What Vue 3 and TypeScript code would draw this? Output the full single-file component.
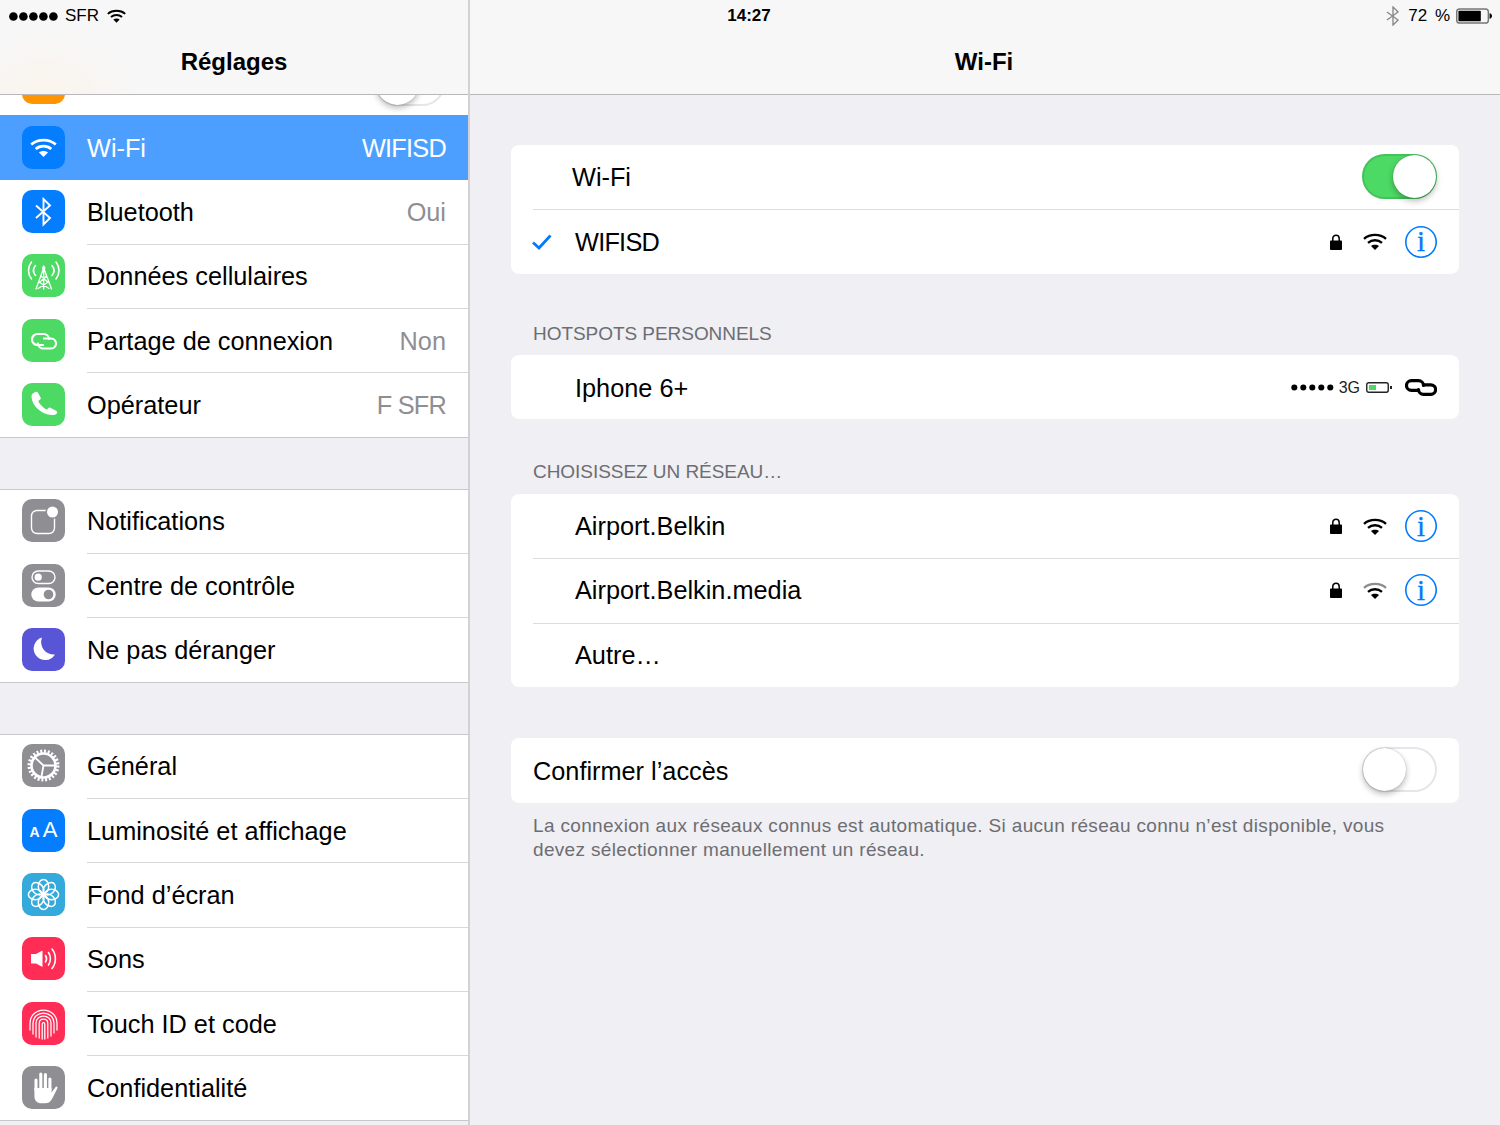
<script setup lang="ts">
interface SideRow { label: string; icon: string; color: string; value?: string; active?: boolean; caps?: boolean }

const groups: SideRow[][] = [
  [
    { label: 'Wi-Fi', icon: 'wifi', color: 'blue', value: 'WIFISD', active: true, caps: true },
    { label: 'Bluetooth', icon: 'bt', color: 'blue', value: 'Oui' },
    { label: 'Données cellulaires', icon: 'cell', color: 'green' },
    { label: 'Partage de connexion', icon: 'chain-app', color: 'green', value: 'Non' },
    { label: 'Opérateur', icon: 'phone', color: 'green', value: 'F SFR', caps: true },
  ],
  [
    { label: 'Notifications', icon: 'notif', color: 'gray' },
    { label: 'Centre de contrôle', icon: 'control', color: 'gray' },
    { label: 'Ne pas déranger', icon: 'moon', color: 'purple' },
  ],
  [
    { label: 'Général', icon: 'gear', color: 'gray' },
    { label: 'Luminosité et affichage', icon: 'aa', color: 'blue' },
    { label: 'Fond d’écran', icon: 'flower', color: 'teal' },
    { label: 'Sons', icon: 'sound', color: 'red' },
    { label: 'Touch ID et code', icon: 'finger', color: 'red' },
    { label: 'Confidentialité', icon: 'hand', color: 'gray' },
  ],
]

const networks = [
  { name: 'Airport.Belkin', icon: '#wifi' },
  { name: 'Airport.Belkin.media', icon: '#wifi-weak' },
]
</script>

<template>
  <div class="screen">
    <svg class="defs" aria-hidden="true">
      <symbol id="wifi" viewBox="0 0 24 17">
        <g fill="none" stroke="currentColor" stroke-width="2.4">
          <path d="M1 5.8C7 .6 17 .6 23 5.8" />
          <path d="M5 9.8C9 6.4 15 6.4 19 9.8" />
        </g>
        <path fill="currentColor" d="M8 13C10 11.2 14 11.2 16 13L12 17Z" />
      </symbol>
      <symbol id="wifi-weak" viewBox="0 0 24 17">
        <g fill="none" stroke="currentColor" stroke-width="2.4">
          <path opacity=".45" d="M1 5.8C7 .6 17 .6 23 5.8" />
          <path d="M5 9.8C9 6.4 15 6.4 19 9.8" />
        </g>
        <path fill="currentColor" d="M8 13C10 11.2 14 11.2 16 13L12 17Z" />
      </symbol>
      <symbol id="lock" viewBox="0 0 12 16">
        <path fill="none" stroke="currentColor" stroke-width="1.5" d="M2.8 7V4.4a3.2 3.2 0 0 1 6.4 0V7" />
        <rect x="0" y="6.5" width="12" height="9.5" rx=".8" fill="currentColor" />
      </symbol>
      <symbol id="chain" viewBox="0 0 32 17">
        <g fill="none" stroke="currentColor" stroke-width="3.2" stroke-linecap="round">
          <path d="M13 11.4H6.4A4.9 4.9 0 0 1 6.4 1.6H13.5A5 5 0 0 1 18.5 6.5" />
          <path d="M19 5.8H25.8A4.8 4.8 0 0 1 25.8 15.4H18.5A5 5 0 0 1 13.5 10.5" />
        </g>
      </symbol>

      <symbol id="i-wifi" viewBox="0 0 43 43">
        <use href="#wifi" x="8" y="12" width="27" height="19" />
      </symbol>
      <symbol id="i-bt" viewBox="0 0 43 43">
        <path fill="none" stroke="currentColor" stroke-width="1.9" d="M14 15.5 28 28 21.5 34.5V9L28 15.5 14 28" />
      </symbol>
      <symbol id="i-cell" viewBox="0 0 43 43">
        <g fill="none" stroke="currentColor" stroke-width="1.6" stroke-linecap="round">
          <path d="M9.5 8C5.5 13 5.5 20 9.5 25M34 8C38 13 38 20 34 25" />
          <path d="M13.5 11.5C11 14.5 11 18.5 13.5 21.5M30 11.5C32.5 14.5 32.5 18.5 30 21.5" />
          <path stroke-width="1.3" d="M21.7 14 14 35M21.7 14 29.5 35M17 28 27 34.5M26.5 28 16 34.5M19 22 25.5 28M24.5 22 18 28M21.7 12V35" />
        </g>
        <circle cx="21.7" cy="14" r="1.8" fill="currentColor" />
      </symbol>
      <symbol id="i-chain-app" viewBox="0 0 43 43">
        <g fill="none" stroke="currentColor" stroke-width="2.2" stroke-linecap="round">
          <path d="M21 26H15.5A5.5 5.5 0 0 1 15.5 15H21.5A5.5 5.5 0 0 1 27 20" />
          <path d="M22 19.5H29A5 5 0 0 1 29 29.5H21.5A5.5 5.5 0 0 1 16 24.5" />
        </g>
      </symbol>
      <symbol id="i-phone" viewBox="0 0 43 43">
        <path fill="currentColor" d="M9.5 13C9.6 11 12 9.4 14 8.8 15 8.6 15.6 9 16 9.8L18.6 14.6C19 15.3 18.8 16 18.2 16.5L16.2 18C17.6 21 21 25 24.8 26.8L26.4 25C27 24.4 27.7 24.3 28.4 24.7L34.4 28C35.2 28.5 35.3 29.2 35 30 34.2 31.6 32.2 32.2 30 32 19 31.4 9.6 22.6 9.5 13Z" />
      </symbol>
      <symbol id="i-notif" viewBox="0 0 43 43">
        <rect x="9.5" y="11.5" width="23" height="23" rx="5.5" fill="none" stroke="currentColor" stroke-width="1.4" />
        <circle cx="30.5" cy="13" r="7" class="cut-gray" />
        <circle cx="30.5" cy="13" r="5.5" fill="currentColor" />
      </symbol>
      <symbol id="i-control" viewBox="0 0 43 43">
        <rect x="10" y="7" width="23" height="12.5" rx="6.2" fill="none" stroke="currentColor" stroke-width="1.4" />
        <circle cx="16.2" cy="13.2" r="3.6" fill="currentColor" />
        <rect x="9.3" y="23.5" width="24.4" height="14" rx="7" fill="currentColor" />
        <circle cx="26.5" cy="30.5" r="4.8" class="cut-gray" />
      </symbol>
      <symbol id="i-moon" viewBox="0 0 43 43">
        <path fill="currentColor" d="M20 9.5A11.5 11.5 0 1 0 33 26.5 12.5 12.5 0 0 1 20 9.5Z" />
      </symbol>
      <symbol id="i-gear" viewBox="0 0 43 43">
        <circle cx="21.5" cy="21.5" r="14.2" fill="none" stroke="currentColor" stroke-width="3.6" stroke-dasharray="2 1.72" />
        <circle cx="21.5" cy="21.5" r="12" fill="none" stroke="currentColor" stroke-width="2.6" />
        <path fill="none" stroke="currentColor" stroke-width="1.8" d="M13.5 14 21.5 21.5H33M21.5 21.5 19.5 32.5" />
      </symbol>
      <symbol id="i-flower" viewBox="0 0 43 43">
        <g fill="none" stroke="currentColor" stroke-width="1.5">
          <ellipse v-for="a in 8" :key="a" cx="21.5" cy="13.4" rx="5.2" ry="7" :transform="`rotate(${a * 45} 21.5 21.5)`" />
        </g>
        <circle cx="21.5" cy="21.5" r="2.4" fill="currentColor" />
      </symbol>
      <symbol id="i-sound" viewBox="0 0 43 43">
        <path fill="currentColor" d="M9 17H14L20.5 13.5V30L14 26.5H9Z" />
        <g fill="none" stroke="currentColor" stroke-width="1.6" stroke-linecap="round">
          <path d="M23.5 18.5C24.8 20.5 24.8 23 23.5 25" />
          <path d="M26.5 15.5C29 19 29 24.5 26.5 28" />
          <path d="M30 12C34.5 17.5 34.5 26 30 31.5" />
        </g>
      </symbol>
      <symbol id="i-finger" viewBox="0 0 43 43">
        <g fill="none" stroke="currentColor" stroke-width="1.25" stroke-linecap="round">
          <path d="M8 28V21C8 13.5 14 8 21.5 8S35 13.5 35 21V28" />
          <path d="M11 32V21C11 15 16 11 21.5 11S32 15 32 21V31" />
          <path d="M14 35V21C14 17 17.5 14 21.5 14S29 17 29 21V34" />
          <path d="M17.2 36V21.5C17.2 19 19 17.2 21.5 17.2S25.8 19 25.8 21.5V36" />
          <path d="M20.2 37V22C20.2 20.2 22.8 20.2 22.8 22V37" />
        </g>
      </symbol>
      <symbol id="i-hand" viewBox="0 0 43 43">
        <g fill="none" stroke="currentColor" stroke-width="3.1" stroke-linecap="round">
          <path d="M14 24V14M18.8 22V8M23.4 22V8.5M27.9 24V13" />
        </g>
        <path fill="currentColor" d="M12.4 22H29.5V26.5L33.6 21C34.6 20 36 21 35.4 22.2L30 33C28.5 35.8 26.5 37.3 23 37.3H19.5C15 37.3 12.4 34.5 12.4 30Z" />
      </symbol>
    </svg>

    <div class="status">
      <div class="status-left">
        <svg class="signal" viewBox="0 0 50 9"><circle v-for="n in 5" :key="n" :cx="n * 10 - 5.6" cy="4.5" r="4.3" /></svg>
        <span>SFR</span>
        <svg class="status-wifi"><use href="#wifi" /></svg>
      </div>
      <div class="status-time">14:27</div>
      <div class="status-right">
        <svg class="status-bt" viewBox="0 0 14 20">
          <path fill="none" stroke="#8a8a8a" stroke-width="1.4" d="M1 6 12 14 7 19V1L12 6 1 14" />
        </svg>
        <span class="percent">72 %</span>
        <svg class="status-batt" viewBox="0 0 37 16">
          <rect x=".75" y=".75" width="32.5" height="14.5" rx="3" fill="none" stroke="#777" stroke-width="1.5" />
          <rect x="2.5" y="2.5" width="23" height="11" rx="1" />
          <path d="M34.5 5.2C36 5.5 37 6.5 37 8S36 10.5 34.5 10.8Z" />
        </svg>
      </div>
    </div>

    <aside class="side">
      <header class="nav side-nav">Réglages</header>
      <div class="peek">
        <span class="app orange peek-app"></span>
        <span class="switch peek-switch"><i class="knob"></i></span>
      </div>
      <section v-for="(group, g) in groups" :key="g" class="group">
        <div v-for="row in group" :key="row.label" class="side-row" :class="{ active: row.active }">
          <span class="app" :class="row.color">
            <span v-if="row.icon === 'aa'" class="aa"><small>A</small>A</span>
            <svg v-else class="app-svg"><use :href="`#i-${row.icon}`" /></svg>
          </span>
          <div class="side-body">
            <span>{{ row.label }}</span>
            <span v-if="row.value" class="value" :class="{ caps: row.caps }">{{ row.value }}</span>
          </div>
        </div>
      </section>
    </aside>

    <main class="main">
      <header class="nav main-nav">Wi-Fi</header>
      <div class="content">
        <section class="card">
          <div class="row">
            <span class="name toggle-name">Wi-Fi</span>
            <span class="switch on"><i class="knob"></i></span>
          </div>
          <div class="row low">
            <svg class="check" viewBox="0 0 20 16"><path fill="none" stroke="#007aff" stroke-width="2.8" d="M1 8.5 7 14 18.5 1.5" /></svg>
            <span class="name net-name caps">WIFISD</span>
            <svg class="lock"><use href="#lock" /></svg>
            <svg class="wifi"><use href="#wifi" /></svg>
            <span class="info">i</span>
          </div>
        </section>

        <h2 class="caption cap-hotspot">Hotspots personnels</h2>
        <section class="card">
          <div class="row low">
            <span class="name indent">Iphone 6+</span>
            <svg class="small-signal" viewBox="0 0 44 7"><circle v-for="n in 5" :key="n" :cx="n * 9.2 - 5.8" cy="3.5" r="3.1" /></svg>
            <span class="three-g">3G</span>
            <svg class="hot-batt" viewBox="0 0 26 11">
              <rect x=".75" y=".75" width="21.5" height="9.5" rx="2" fill="none" stroke="#222" stroke-width="1.4" />
              <rect x="3" y="3" width="7" height="5" fill="#4cd964" />
              <rect x="24" y="4" width="2" height="3" fill="#222" />
            </svg>
            <svg class="chain"><use href="#chain" /></svg>
          </div>
        </section>

        <h2 class="caption cap-network">Choisissez un réseau…</h2>
        <section class="card">
          <div v-for="net in networks" :key="net.name" class="row">
            <span class="name indent">{{ net.name }}</span>
            <svg class="lock"><use href="#lock" /></svg>
            <svg class="wifi"><use :href="net.icon" /></svg>
            <span class="info">i</span>
          </div>
          <div class="row">
            <span class="name indent">Autre…</span>
          </div>
        </section>

        <section class="card confirm">
          <div class="row confirm-row">
            <span class="name">Confirmer l’accès</span>
            <span class="switch"><i class="knob"></i></span>
          </div>
        </section>
        <p class="note">La connexion aux réseaux connus est automatique. Si aucun réseau connu n’est disponible, vous devez sélectionner manuellement un réseau.</p>
      </div>
    </main>
  </div>
</template>

<style scoped>
.screen {
  position: relative;
  display: flex;
  width: 1500px;
  height: 1125px;
  overflow: hidden;
  background: #efeff4;
  color: #000;
  font-family: "Liberation Sans", Arial, sans-serif;
}
.defs { position: absolute; width: 0; height: 0; }
.cut-gray { fill: #8e8e93; }

.status {
  position: absolute;
  inset: 0 0 auto 0;
  z-index: 2;
  height: 30px;
  display: grid;
  grid-template-columns: 1fr auto 1fr;
  align-items: center;
  padding: 0 8px;
  font-size: 17px;
}
.status-left { display: flex; align-items: center; padding-top: 2px; }
.signal { width: 50px; height: 9px; margin: 0 6px 0 1px; }
.status-wifi { width: 19px; height: 14px; margin-left: 8px; color: #000; }
.status-time { font-weight: 700; font-size: 17px; margin-right: 2px; padding-top: 2px; }
.status-right { display: flex; align-items: center; justify-content: flex-end; padding-top: 2px; }
.status-bt { width: 14px; height: 20px; margin-right: 8px; }
.percent { word-spacing: 3px; }
.status-batt { width: 36px; height: 16px; margin-left: 6px; }

.nav {
  height: 95px;
  box-sizing: border-box;
  padding-top: 30px;
  display: flex;
  align-items: center;
  justify-content: center;
  flex: none;
  background: #f7f7f7;
  border-bottom: 1px solid #b8b8ba;
  font-size: 24px;
  font-weight: 700;
}
.main-nav { padding-right: 2px; }
.side-nav {
  background: radial-gradient(ellipse 90px 60px at 45px 92px, #faf4ec 0%, #f7f7f7 100%);
}

.side {
  width: 470px;
  box-sizing: border-box;
  flex: none;
  border-right: 2px solid #d2d2d5;
}
.peek {
  height: 20px;
  overflow: hidden;
  background: #fff;
  position: relative;
  display: flex;
  justify-content: space-between;
  padding: 0 23px 0 22px;
}
.peek-app { margin-top: -34px; }

.group {
  margin-bottom: 52px;
  background: #fff;
  box-shadow: inset 0 1px 0 #c8c7cc, 0 1px 0 #c8c7cc;
}
.side-row {
  height: 64.33px;
  padding-left: 22px;
  display: flex;
  align-items: center;
  gap: 22px;
  font-size: 25.3px;
}
.side-row.active { background: #4c9fff; color: #fff; box-shadow: 0 1px 0 #4c9fff; }
.side-body {
  flex: 1;
  height: 100%;
  box-sizing: border-box;
  padding: 2px 22px 0 0;
  display: flex;
  align-items: center;
  justify-content: space-between;
  box-shadow: 0 1px 0 #d8d8dc;
}
.side-row:last-child .side-body, .side-row.active .side-body { box-shadow: none; }
.value { color: #8e8e93; }
.active .value { color: #fff; }
.caps { letter-spacing: -.75px; }

.app {
  width: 43px;
  height: 43px;
  flex: none;
  border-radius: 10px;
  color: #fff;
  display: flex;
  align-items: center;
  justify-content: center;
}
.app-svg { width: 43px; height: 43px; }
.blue { background: #057dff; }
.green { background: #4cd964; }
.gray { background: #8e8e93; }
.purple { background: #5856d6; }
.teal { background: #34aadc; }
.red { background: #ff2d55; }
.orange { background: #ff9500; }
.aa { font-size: 22px; line-height: 1; }
.aa small { font-size: 14px; font-weight: 700; margin-right: 3px; }

.main { flex: 1; min-width: 0; }
.content { padding: 50px 41px 0; }

.card { background: #fff; border-radius: 8px; overflow: hidden; }
.row {
  height: 64.33px;
  box-sizing: border-box;
  margin-left: 22px;
  padding: 1px 22px 0 0;
  display: flex;
  align-items: center;
  font-size: 25.3px;
  box-shadow: 0 1px 0 #dcdcdf;
}
.row.low { padding-top: 2px; }
.row:last-child { box-shadow: none; }
.row.confirm-row { height: 65px; padding-top: 2px; }
.name { flex: 1; }
.toggle-name { padding-left: 39px; }
.net-name { padding-left: 22px; }
.indent { padding-left: 42px; }

.caption {
  margin: 0;
  font-size: 19px;
  line-height: 24px;
  font-weight: 400;
  letter-spacing: -.05px;
  text-transform: uppercase;
  color: #6d6d72;
  padding-left: 22px;
}
.cap-hotspot { padding-top: 48.33px; padding-bottom: 9px; }
.cap-network { padding-top: 41px; padding-bottom: 9.67px; }
.confirm { margin-top: 51px; }
.note {
  margin: 11px 0 0;
  padding: 0 44px 0 22px;
  font-size: 19px;
  line-height: 24px;
  letter-spacing: .33px;
  color: #6d6d72;
}

.check { width: 20px; height: 16px; flex: none; margin-left: -1px; margin-right: 1px; }
.lock { width: 12px; height: 16px; color: #000; flex: none; margin-top: -1px; }
.wifi { width: 24px; height: 17px; margin-left: 21px; flex: none; color: #000; margin-top: -1px; }
.info {
  width: 32px;
  height: 32px;
  margin: -1px 0 0 18px;
  flex: none;
  border-radius: 50%;
  box-shadow: inset 0 0 0 1.6px #007aff;
  display: flex;
  align-items: center;
  justify-content: center;
  color: #007aff;
  font: 400 29px/1 "Liberation Serif", serif;
  -webkit-text-stroke: .3px #007aff;
}
.small-signal { width: 43px; height: 7px; flex: none; margin-top: -1px; }
.three-g { font-size: 16px; color: #222; margin: -1px 0 0 5px; }
.hot-batt { width: 26px; height: 11px; margin: -1px 0 0 6px; flex: none; }
.chain { width: 32px; height: 17px; margin: -1px 0 0 13px; flex: none; color: #000; }

.switch {
  position: relative;
  display: block;
  width: 75px;
  height: 45px;
  margin-top: -3px;
  box-sizing: border-box;
  flex: none;
  border-radius: 23px;
  border: 2px solid #e5e5ea;
  background: #fff;
}
.switch.on { background: #4cd964; border-color: #42c45a; }
.peek .peek-switch { margin-top: -34px; width: 70px; }
.knob {
  position: absolute;
  top: -1px;
  left: -1px;
  width: 43px;
  height: 43px;
  border-radius: 50%;
  background: #fff;
  box-shadow: 0 3px 6px rgba(0, 0, 0, .28), 0 0 1px rgba(0, 0, 0, .35);
}
.on .knob { left: auto; right: -1px; }
</style>
